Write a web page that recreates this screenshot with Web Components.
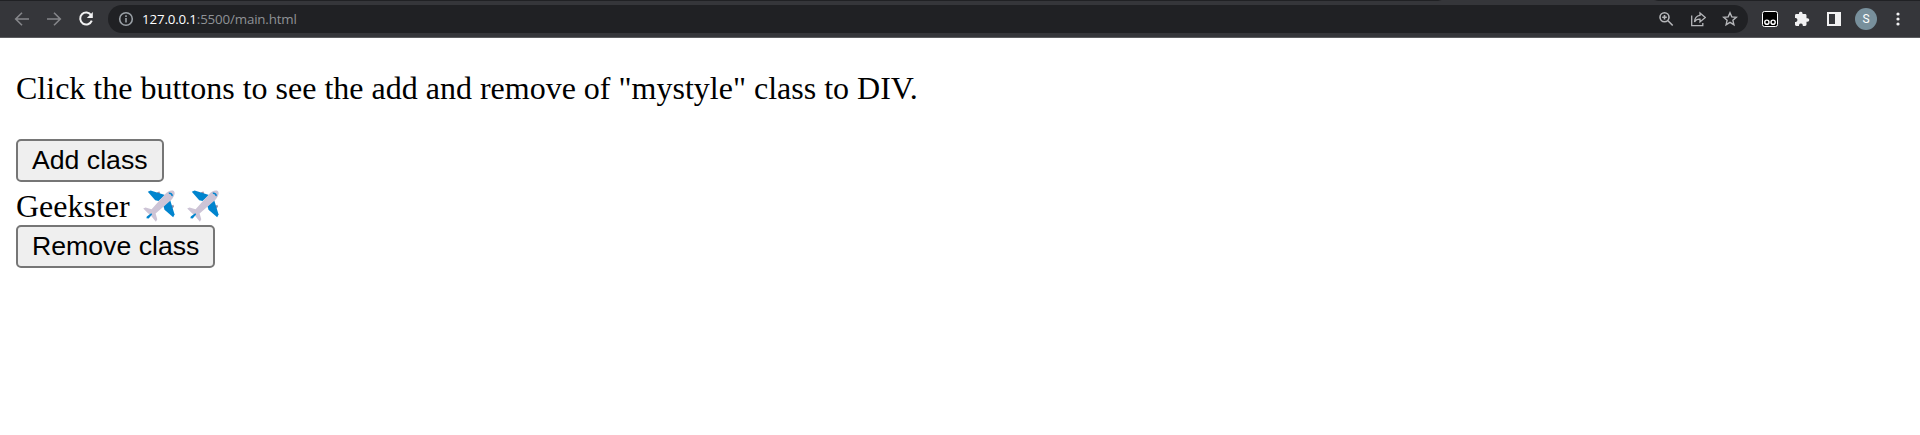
<!DOCTYPE html>
<html lang="en"><head><meta charset="utf-8"><title>main.html</title>
<style>html,body{margin:0;background:#fff;color:#000}body{overflow:hidden}</style></head><body>
<browser-bar></browser-bar>
<class-demo>
<span slot="intro">Click the buttons to see the add and remove of "mystyle" class to DIV.</span>
</class-demo>
<script>
class PlaneIcon extends HTMLElement{
  constructor(){super();this.attachShadow({mode:'open'}).innerHTML=`<style>:host{display:block;flex:none;width:32px;height:32px}svg{display:block}</style><svg width="32" height="32" viewBox="0 0 32 32">
<path d="M14 2.2 16.5 1.4 17.2 4 14.8 4.8ZM28 16 30.4 14.8 31 17 28.8 18.5Z" fill="#998ea4"/>
<path d="M4.8 1.8 7.6.5 22 5 15.5 11 12.2 10.3Z" fill="#0084ce"/>
<path d="M30.2 27.2 31.6 24.5 27 9.5 20.5 16.3 21.5 19.7Z" fill="#0084ce"/>
<path d="M.2 18.4 2.5 17.5 8.6 19.2 21.8 4.4C24.4 1.5 28.2-.4 30.7.9 32.7 2.8 31.4 7 28.2 10L12.6 23.5 14.3 29.3 12.9 31.7 7.8 25.5 4.8 23.1Z" fill="#cdc4d6"/>
<path d="M8.2 23.2 9.2 24.2 5.7 28.4 3.4 28.2 3.8 26.4Z" fill="#0084ce"/>
<path d="M25.8 3.3C27.6 2.8 29.4 4.5 29.1 6.2" fill="none" stroke="#0084ce" stroke-width="1.5"/></svg>`}
}
customElements.define('plane-icon',PlaneIcon);

class DemoButton extends HTMLElement{
  constructor(){super();this.attachShadow({mode:'open'}).innerHTML=`<style>:host{display:block;height:43px}
button{display:block;box-sizing:border-box;height:43px;margin:0;padding:0 14px 1px;border:2px solid #767676;border-radius:5px;background:#efefef;color:#000;font:26.667px/36px "Liberation Sans",Arial,sans-serif;white-space:nowrap}</style>
<button type="button"><slot></slot></button>`}
}
customElements.define('demo-button',DemoButton);

class ClassDemo extends HTMLElement{
  constructor(){super();this.attachShadow({mode:'open'}).innerHTML=`<style>
:host{display:block;padding:32px 16px 0;font:32px/37px "Liberation Serif","Times New Roman",serif}
p{margin:0 0 32px;white-space:nowrap}
.row{display:flex;height:43px;align-items:flex-start}
.row span{padding-top:6px}
plane-icon{margin:8px 12px 0 0}
.row span+plane-icon{margin-left:13px}</style>
<p><slot name="intro"></slot></p>
<demo-button>Add class</demo-button>
<div class="row"><span>Geekster</span><plane-icon></plane-icon><plane-icon></plane-icon></div>
<demo-button>Remove class</demo-button>`}
}
customElements.define('class-demo',ClassDemo);

class BrowserBar extends HTMLElement{
  constructor(){super();this.attachShadow({mode:'open'}).innerHTML=`<style>
:host{display:block;height:38px;box-sizing:border-box;border-bottom:1px solid #5b5c5f;
 background:linear-gradient(90deg,#202124 1438px,#35363a 1442px,#35363a 1654px,#202124 1658px) 0 0/100% 1px no-repeat,#35363a;
 font:14px/20px "Open Sans","Noto Sans",sans-serif}
.bar{display:flex;height:37px;padding-top:5px;box-sizing:border-box;align-items:flex-start}
svg{display:block;flex:none;fill:none;stroke-width:1.6}
.nav{display:flex;height:28px;align-items:center;width:108px;padding-left:14px;box-sizing:border-box;gap:16px;stroke:#85868a}
.omni{display:flex;box-sizing:border-box;width:1640px;height:28px;border-radius:14px;background:#202124;align-items:center;padding:0 10px;color:#8f9296}
.url{margin-left:8px;font-size:13.33px;flex:1;letter-spacing:-.16px}
.url b{font-weight:400;color:#fff}
.tools{display:flex;gap:16px;stroke:#b5b6b9}
.right{display:flex;height:28px;align-items:center;padding-left:14px}
.avatar{width:22px;height:22px;border-radius:50%;background:#78909c;color:#fff;font:12px/22px Roboto,sans-serif;text-align:center;margin-left:14px}
</style>
<div class="bar"><div class="nav">
<svg width="16" height="16"><path d="M15 8H2M8 1.7 1.7 8 8 14.3"/></svg>
<svg width="16" height="16"><path d="M1 8h13M8 1.7 14.3 8 8 14.3"/></svg>
<svg width="16" height="16" stroke="#f1f1f2" style="stroke-width:2"><path d="M13.2 4.2A6 6 0 1 0 13.8 9.7"/><path d="M14.8 1v6H8.8Z" fill="#f1f1f2" stroke="none"/></svg>
</div><div class="omni">
<svg width="16" height="16" stroke="#9aa0a6"><circle cx="8" cy="8" r="6.3"/><path d="M8 7v4.5M8 4.2v1.7"/></svg>
<div class="url"><b>127.0.0.1</b>:5500/main.html</div>
<div class="tools">
<svg width="16" height="16"><circle cx="6.5" cy="6.3" r="4.5"/><path d="m10 9.8 4.7 4.7M4.2 6.3h4.6M6.5 4v4.6"/></svg>
<svg width="16" height="16" style="stroke-width:1.3"><path d="M1.7 4.5v10.1H12.8V12"/><path d="M10 1.9 15.3 6.4 10 10.9V8.2C7.3 8.1 5.5 9.2 4.5 11 4.7 7.3 6.7 4.8 10 4.4Z"/></svg>
<svg width="16" height="16" style="stroke-width:1.4"><path d="m8 1.8 1.8 4.1 4.5.4-3.4 3 1 4.4L8 11.4l-3.9 2.3 1-4.4-3.4-3 4.5-.4Z"/></svg>
</div></div><div class="right">
<svg width="16" height="16"><rect x=".5" y=".5" width="15" height="15" rx="2" fill="#000" stroke="#fff" stroke-width="1"/><g stroke="#fff" stroke-width="1.4"><circle cx="4.9" cy="11.2" r="2.1"/><circle cx="11.1" cy="11.2" r="2.1"/></g></svg>
<svg width="16" height="16" viewBox="0 0 16 16" style="margin-left:16px"><path fill="#f1f1f2" d="M13.5 7.2h-1V4.4c0-.8-.6-1.4-1.4-1.4H8.5V2.1A1.8 1.8 0 0 0 5 2.1V3H2.4C1.6 3 1 3.6 1 4.4v2.7h.9a2 2 0 0 1 0 3.9H1v2.6c0 .8.6 1.4 1.4 1.4H5v-1a2 2 0 0 1 3.8 0v1h2.3c.8 0 1.4-.6 1.4-1.4v-2.8h1a1.8 1.8 0 0 0 0-3.6Z"/></svg>
<svg width="14" height="14" style="margin-left:17px"><path fill="#f1f1f2" fill-rule="evenodd" d="M0 0h14v14H0ZM2 2v10h6V2Z"/></svg>
<div class="avatar">S</div>
<svg width="4" height="14" style="margin-left:19px"><g fill="#f1f1f2"><circle cx="2" cy="2" r="1.6"/><circle cx="2" cy="7" r="1.6"/><circle cx="2" cy="12" r="1.6"/></g></svg>
</div></div>`}
}
customElements.define('browser-bar',BrowserBar);
</script></body></html>
